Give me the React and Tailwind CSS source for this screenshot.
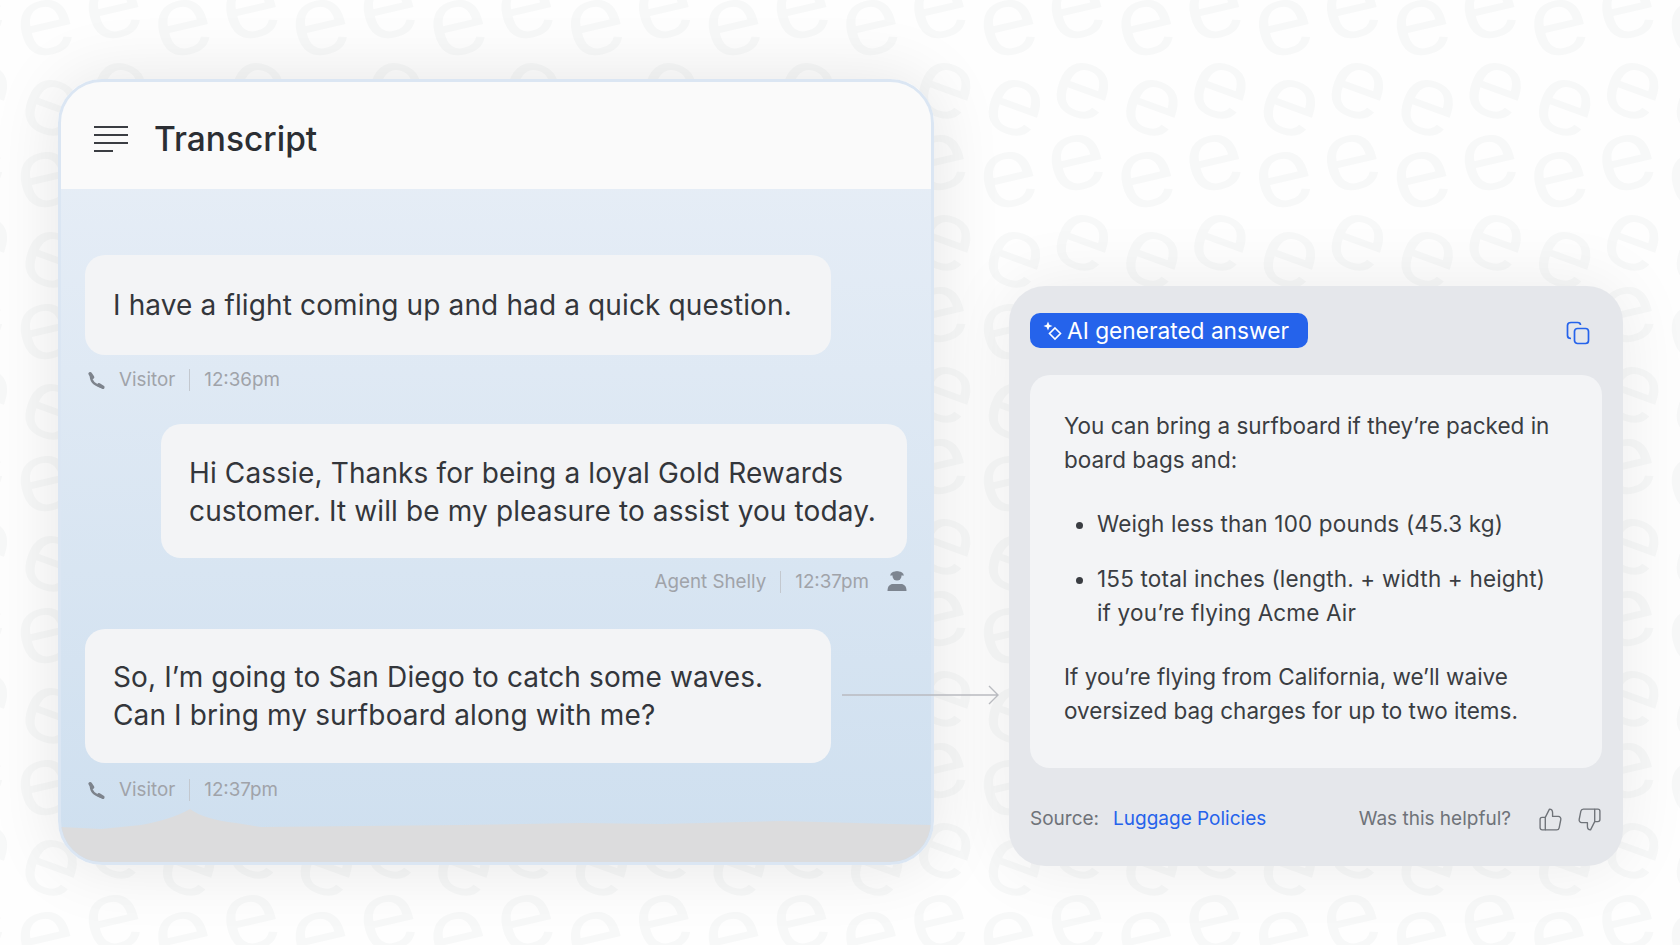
const font = { fontFamily: 'Inter, sans-serif' };

// background letters: pairs repeat every 137.6px across and 152px down
const pairs = [
  [114, 11, -13],
  [46, 28, -13],
  [119, 91, 20],
  [51, 108, 20],
];
const marks = [];
pairs.forEach(([x0, y0, a]) => {
  for (let k = -1; k < 14; k++) {
    for (let j = -1; j < 8; j++) {
      const x = x0 + 137.6 * k;
      const y = y0 + 152 * j;
      if (x > -30 && x < 1710 && y > -30 && y < 975) marks.push([x, y, a]);
    }
  }
});

function Pattern() {
  return (
    <svg className="absolute inset-0" width="1680" height="945">
      <g fill="#f7f8f8" fontFamily="Liberation Sans" fontSize="100">
        {marks.map(([x, y, a], i) => (
          <text key={i} textAnchor="middle" transform={`translate(${x} ${y}) rotate(${a}) scale(1.05 1) translate(0 26)`}>
            e
          </text>
        ))}
      </g>
    </svg>
  );
}

function PhoneIcon() {
  return (
    <svg className="mr-[13px] ml-[2px]" width="19" height="19" viewBox="0 0 24 24" fill="none" stroke="#7d838c">
      <path d="M5 5Q4 16 18 20" strokeWidth="3" />
      <path d="M4 3.500l3 4.500M15 17.500l5 3" strokeWidth="4.500" strokeLinecap="round" />
    </svg>
  );
}

function Meta({ name, time, agent }) {
  return (
    <div className={`flex items-center h-[24px] text-[18.8px] text-[#a0a3a9] ${agent ? 'justify-end' : ''}`}>
      {!agent && <PhoneIcon />}
      <span>{name}</span>
      <span className="w-px h-[22px] bg-[#c3c8cf] mx-[14px]" />
      <span>{time}</span>
      {agent && (
        <svg className="ml-[17px] mb-[2px]" width="22" height="22" viewBox="0 0 22 22">
          <circle cx="11" cy="6" r="4.500" fill="#7d8590" />
          <path d="M5 3.500c2-3 10-3 12 0l1 2H4z" fill="#7d8590" />
          <path d="M1.500 21c0-5 2.500-7 5.500-7h8c3 0 5.500 2 5.500 7z" fill="#7d8590" />
        </svg>
      )}
    </div>
  );
}

function Bubble({ children, className }) {
  return (
    <div className={`bg-[#f3f4f6] rounded-[20px] text-[28px] leading-[38px] tracking-[0.13px] text-[#33363b] ${className}`}>
      {children}
    </div>
  );
}

export default function App() {
  return (
    <div className="relative w-[1680px] h-[945px] overflow-hidden bg-[#fefefe]" style={font}>
      <Pattern />
      <div className="relative flex pl-[58px] pt-[79px] gap-[75px]">
        {/* Transcript panel */}
        <div className="relative w-[876px] h-[786px] rounded-[44px] border-[3px] border-[#dbe6f3] overflow-hidden bg-gradient-to-b from-[#e9eff7] to-[#cedfef] shadow-[0_0_70px_rgba(0,0,0,0.1)] flex flex-col">
          <div className="h-[107px] bg-[#fafafa] flex items-center pl-[33px] pt-[6px] shrink-0">
            <svg width="34" height="28" viewBox="0 0 34 28">
              <g stroke="#3a3d42" strokeWidth="2">
                <path d="M0 2h34M0 10h34M0 18h34M0 26h19" />
              </g>
            </svg>
            <h1 className="ml-[26px] mt-[1px] text-[33.5px] font-medium text-[#2b2e33]">Transcript</h1>
          </div>
          <div className="flex-1 flex flex-col pl-[24px] pr-[23px] pt-[66px]">
            <Bubble className="w-[746px] h-[100px] pl-[28px] flex items-center">
              I have a flight coming up and had a quick question.
            </Bubble>
            <div className="mt-[13px]">
              <Meta name="Visitor" time="12:36pm" />
            </div>
            <Bubble className="mt-[32px] ml-[76px] w-[746px] h-[134px] pl-[28px] pt-[2px] flex items-center">
              <p>
                Hi Cassie, Thanks for being a loyal Gold Rewards
                <br />
                customer. It will be my pleasure to assist you today.
              </p>
            </Bubble>
            <div className="mt-[12px]">
              <Meta name="Agent Shelly" time="12:37pm" agent />
            </div>
            <Bubble className="mt-[35px] w-[746px] h-[134px] pl-[28px] flex items-center">
              <p>
                So, I’m going to San Diego to catch some waves.
                <br />
                Can I bring my surfboard along with me?
              </p>
            </Bubble>
            <div className="mt-[15px]">
              <Meta name="Visitor" time="12:37pm" />
            </div>
          </div>
          <svg className="absolute left-0 bottom-0" width="870" height="60" viewBox="0 0 870 60">
            <path
              d="M0 25 L40 27 L80 23 Q112 17 129 7 Q142 17 175 21 L200 25 L400 23 L520 21 L600 22 L720 19 L870 23 V60 H0 Z"
              fill="#dcdcdd"
            />
          </svg>
        </div>

        {/* AI answer panel */}
        <div className="mt-[207px] w-[614px] h-[580px] rounded-[36px] bg-[#e5e7eb] shadow-[0_0_70px_rgba(0,0,0,0.08)] px-[21px] flex flex-col">
          <div className="flex items-center justify-between mt-[27px] pr-[12px]">
            <div className="w-[278px] h-[35px] rounded-[10px] bg-[#2563eb] text-white text-[22.7px] flex items-center pl-[10px] pt-[1px]">
              <svg width="24" height="24" viewBox="0 0 24 24" fill="none" stroke="#fff" strokeWidth="1.6" className="mr-[3px] mb-[1px]">
                <path d="M15 9l5.500 5.500L15 20l-5.500-5.500z" />
                <path d="M8 2.500l1.300 3.200 3.200 1.300-3.200 1.300L8 11.500 6.700 8.300 3.500 7l3.200-1.300z" fill="#fff" stroke="none" />
              </svg>
              AI generated answer
            </div>
            <svg className="mt-[4px]" width="24" height="24" viewBox="0 0 24 24" fill="none" stroke="#2563eb" strokeWidth="1.7">
              <path d="M5 17.500c-2 0-3.500-1-3.500-3V4.500c0-2 1.500-3 3.500-3h6.500c2 0 3 1 3 2.500" />
              <rect x="8.500" y="7.500" width="14" height="15" rx="3" />
            </svg>
          </div>
          <div className="mt-[27px] h-[393px] rounded-[20px] bg-[#f3f4f6] pl-[34px] pt-[34px] text-[22.5px] leading-[34px] text-[#3a3d42]">
            <p>
              You can bring a surfboard if they’re packed in
              <br />
              board bags and:
            </p>
            <ul className="list-disc pl-[33px] mt-[30px] tracking-[0.17px]">
              <li>Weigh less than 100 pounds (45.3 kg)</li>
              <li className="mt-[21px]">
                155 total inches (length. + width + height)
                <br />
                if you’re flying Acme Air
              </li>
            </ul>
            <p className="mt-[30px]">
              If you’re flying from California, we’ll waive
              <br />
              oversized bag charges for up to two items.
            </p>
          </div>
          <div className="flex items-center mt-[37px] text-[19px] text-[#6f7379]">
            <span>Source:</span>
            <a className="ml-[14px] text-[#2563eb]">Luggage Policies</a>
            <span className="ml-auto">Was this helpful?</span>
            <svg className="ml-[27px]" width="25" height="25" viewBox="0 0 24 24" fill="none" stroke="#6f7379" strokeWidth="1.3" strokeLinejoin="round">
              <path d="M7 10v12H4a2 2 0 0 1-2-2v-8a2 2 0 0 1 2-2z" />
              <path d="M7 10l4-8c2 0 3 1.500 3 3.500V9h5.500a2.500 2.500 0 0 1 2.400 3l-1.600 8a2.500 2.500 0 0 1-2.400 2H7" />
            </svg>
            <svg className="ml-[14px]" width="25" height="25" viewBox="0 0 24 24" fill="none" stroke="#6f7379" strokeWidth="1.3" strokeLinejoin="round">
              <path d="M17 14V2h3a2 2 0 0 1 2 2v8a2 2 0 0 1-2 2z" />
              <path d="M17 14l-4 8c-2 0-3-1.500-3-3.500V15H4.500a2.500 2.500 0 0 1-2.400-3l1.600-8a2.500 2.500 0 0 1 2.400-2H17" />
            </svg>
          </div>
        </div>
      </div>

      {/* Arrow from bubble to answer */}
      <svg className="absolute left-[842px] top-[685px]" width="158" height="20" viewBox="0 0 158 20" fill="none" stroke="#b9bbc0" strokeWidth="1.4">
        <path d="M0 10h156M147 1l9 9-9 9" />
      </svg>
    </div>
  );
}
